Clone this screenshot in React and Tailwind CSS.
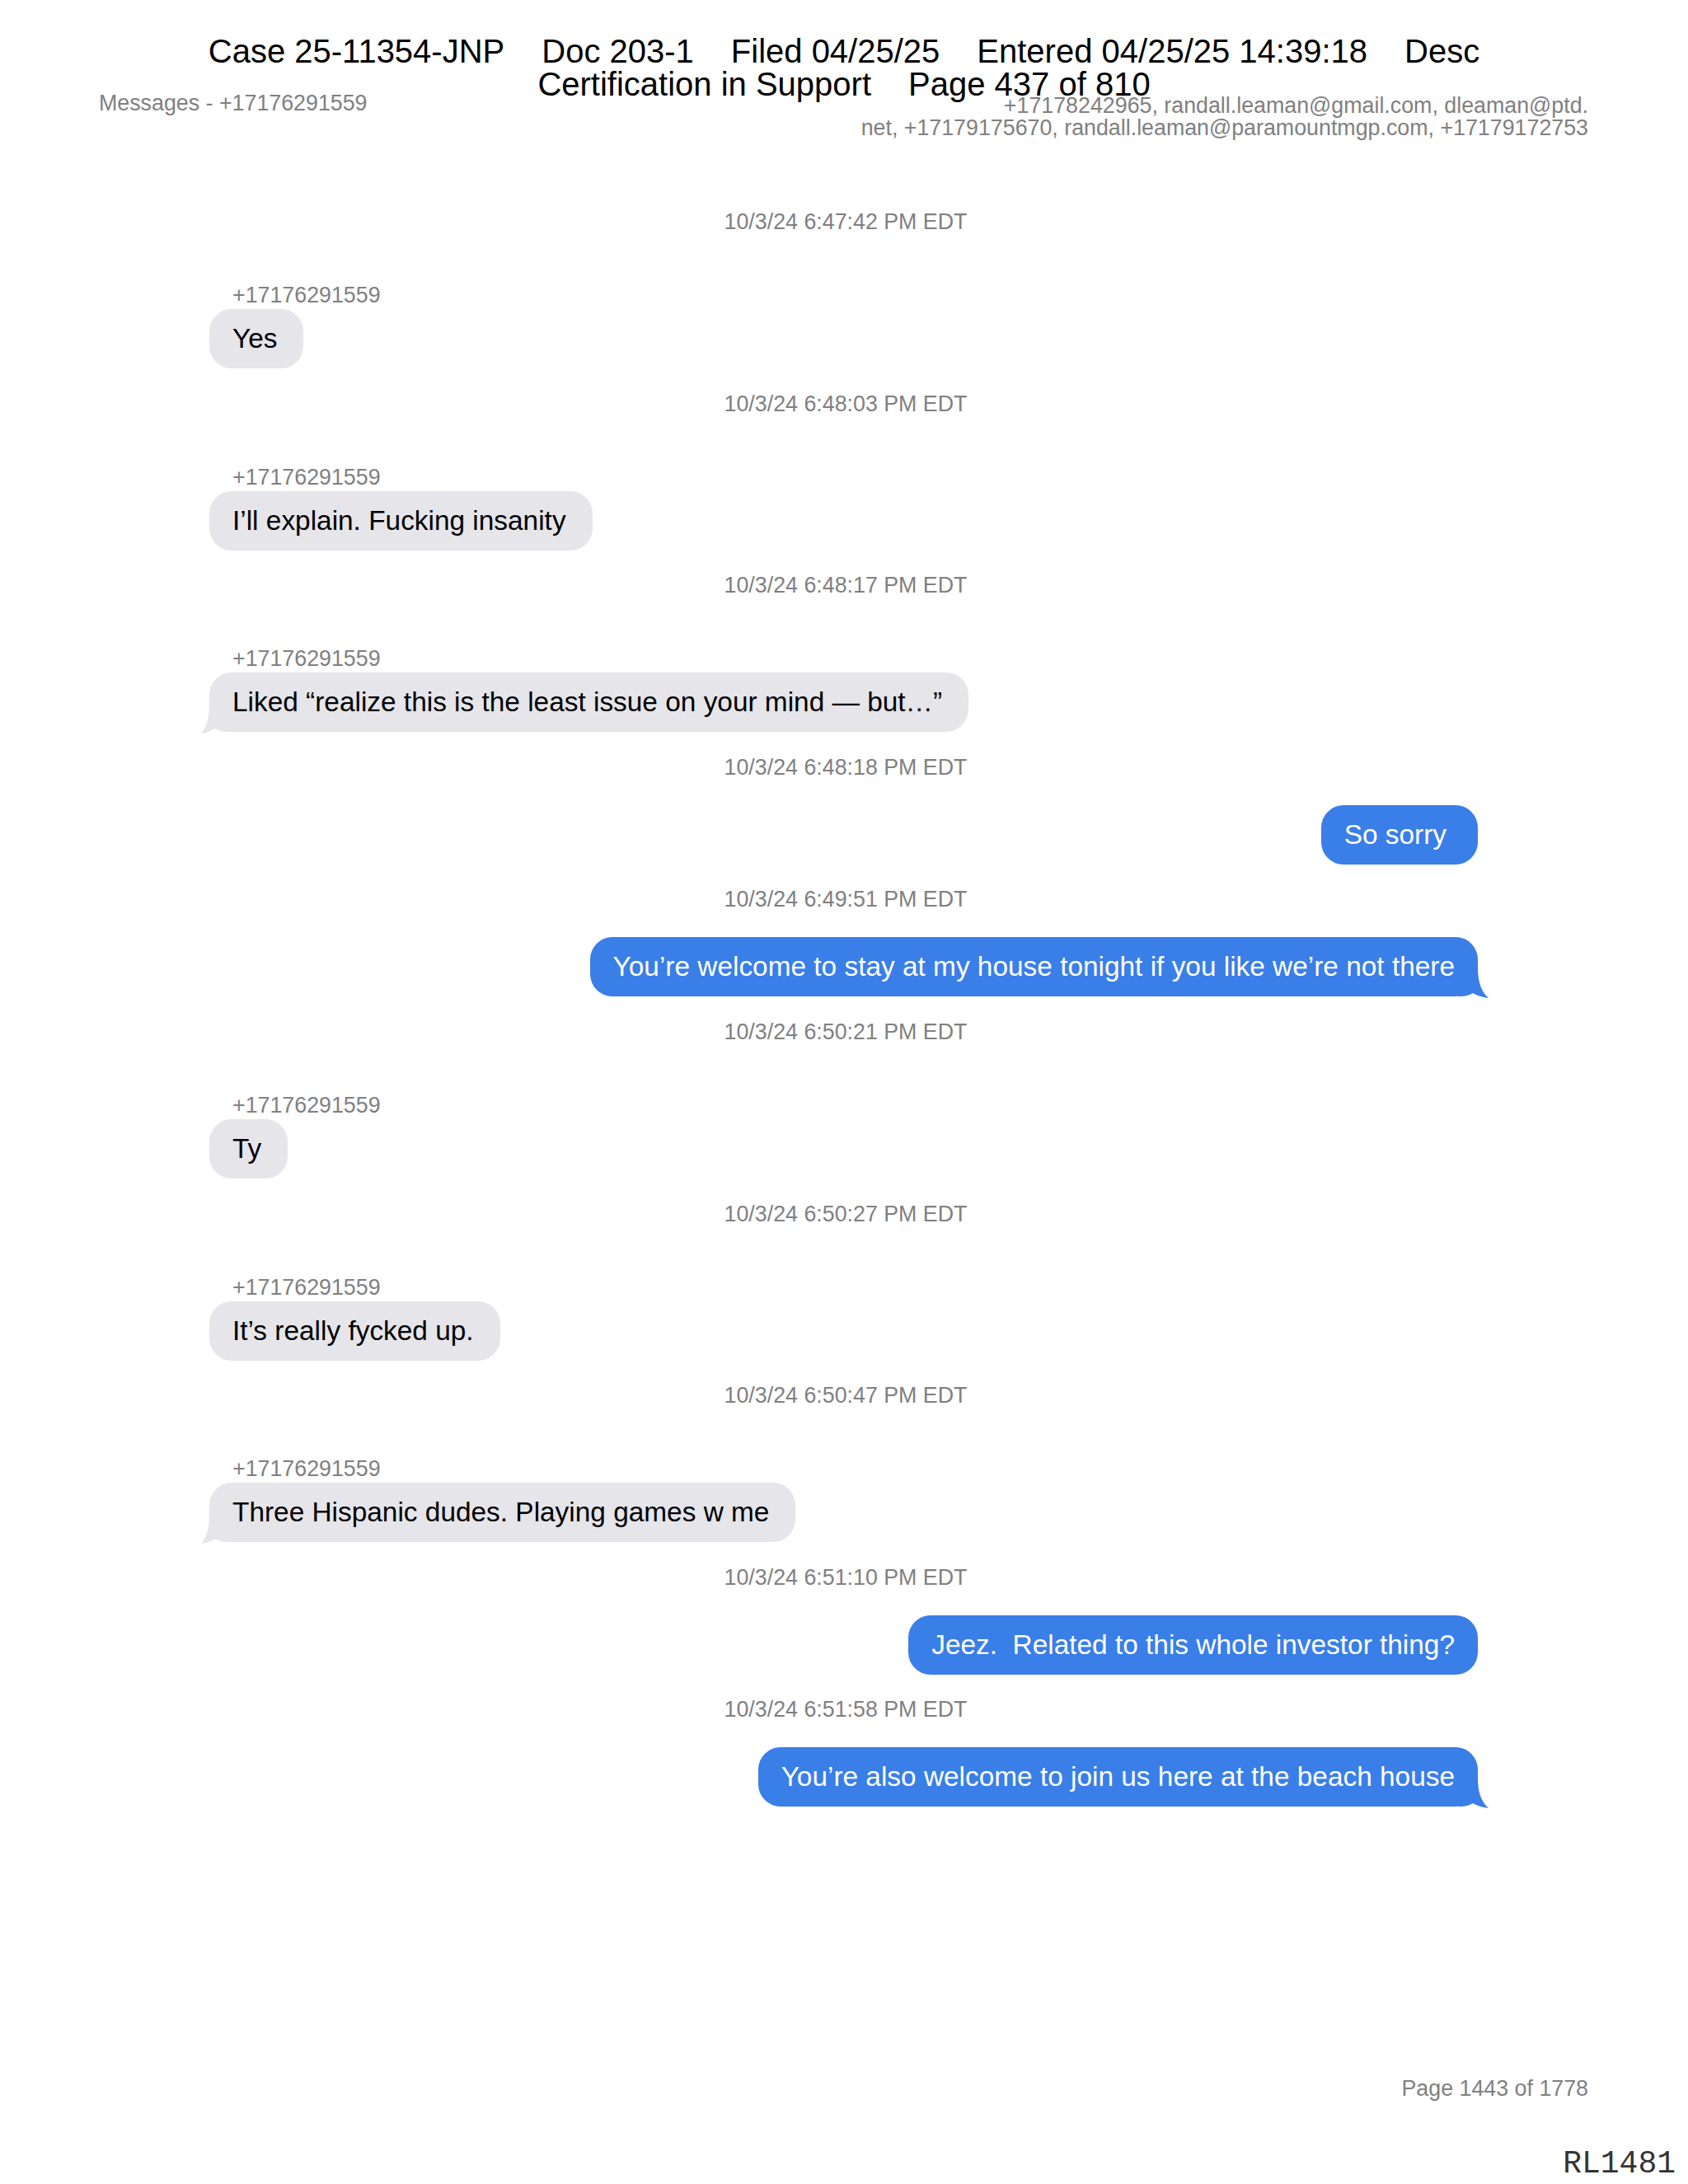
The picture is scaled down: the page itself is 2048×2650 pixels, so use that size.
import React from "react";

const SANS = { fontFamily: '"Liberation Sans", Arial, sans-serif' };

function Ts({ children, first }) {
  return (
    <div
      className={`${first ? "" : "mt-[27.6px]"} h-[30px] pl-[5px] text-center text-[26.8px] leading-[30px] text-[#808080]`}
    >
      {children}
    </div>
  );
}

function LeftTail() {
  return (
    <svg
      className="absolute left-[-10px] bottom-[-2px] w-[36px] h-[36px]"
      viewBox="0 0 36 36"
    >
      <path
        d="M36 0 L10 0 C10 16 7 28 0 36 C7 35 12 33 17 30 C22 33 28 34 36 34 Z"
        fill="#e5e5ea"
      />
    </svg>
  );
}

function RightTail() {
  return (
    <svg
      className="absolute right-[-13px] bottom-[-2px] w-[36px] h-[36px]"
      viewBox="0 0 36 36"
    >
      <path
        d="M0 0 L23 0 C23 16 27 28 36 36 C28 35 22 33 17 30 C12 33 7 34 0 34 Z"
        fill="#3a7ee8"
      />
    </svg>
  );
}

function Left({ label, text, tail }) {
  return (
    <div className="mt-[61px] flex flex-col items-start">
      <div className="h-[27px] pl-[28px] text-[26.8px] leading-[27px] text-[#808080]">
        {label}
      </div>
      <div className="relative mt-[3px] flex h-[72px] items-center whitespace-pre rounded-[27px] bg-[#e5e5ea] pl-[28px] pr-[32px] text-[33.4px] text-black">
        {tail && <LeftTail />}
        <span className="relative">{text}</span>
      </div>
    </div>
  );
}

function Right({ text, tail, extra }) {
  return (
    <div className="mt-[31px] flex flex-col items-end">
      <div
        className={`relative flex h-[72px] items-center whitespace-pre rounded-[27px] bg-[#3a7ee8] pl-[28px] ${extra ? "pr-[38px]" : "pr-[28px]"} text-[33.4px] text-white`}
      >
        {tail && <RightTail />}
        <span className="relative">{text}</span>
      </div>
    </div>
  );
}

export default function App() {
  const label = "+17176291559";
  return (
    <div className="relative w-[2048px] h-[2650px] bg-white overflow-hidden" style={SANS}>
      {/* court filing stamp */}
      <div className="absolute inset-x-0 top-[42px] flex flex-col items-center text-[40px] leading-[40px] text-black">
        <div className="flex gap-x-[45px] whitespace-pre">
          <span>Case 25-11354-JNP</span>
          <span>Doc 203-1</span>
          <span>Filed 04/25/25</span>
          <span>Entered 04/25/25 14:39:18</span>
          <span>Desc</span>
        </div>
        <div className="flex gap-x-[45px] whitespace-pre">
          <span>Certification in Support</span>
          <span>Page 437 of 810</span>
        </div>
      </div>

      {/* document header */}
      <div className="flex items-start justify-between pl-[120px] pr-[121px] pt-[112px] text-[26.8px] leading-[27px] text-[#808080]">
        <div>Messages - +17176291559</div>
        <div className="mt-[3px] text-right">
          <div>+17178242965, randall.leaman@gmail.com, dleaman@ptd.</div>
          <div>net, +17179175670, randall.leaman@paramountmgp.com, +17179172753</div>
        </div>
      </div>

      {/* conversation */}
      <div className="mt-[85px] flex flex-col pl-[254px] pr-[255px]">
        <Ts first>10/3/24 6:47:42 PM EDT</Ts>
        <Left label={label} text="Yes" />
        <Ts>10/3/24 6:48:03 PM EDT</Ts>
        <Left label={label} text="I’ll explain. Fucking insanity" />
        <Ts>10/3/24 6:48:17 PM EDT</Ts>
        <Left
          label={label}
          text="Liked “realize this is the least issue on your mind — but…”"
          tail
        />
        <Ts>10/3/24 6:48:18 PM EDT</Ts>
        <Right text="So sorry" extra />
        <Ts>10/3/24 6:49:51 PM EDT</Ts>
        <Right text="You’re welcome to stay at my house tonight if you like we’re not there" tail />
        <Ts>10/3/24 6:50:21 PM EDT</Ts>
        <Left label={label} text="Ty" />
        <Ts>10/3/24 6:50:27 PM EDT</Ts>
        <Left label={label} text="It’s really fycked up." />
        <Ts>10/3/24 6:50:47 PM EDT</Ts>
        <Left label={label} text="Three Hispanic dudes. Playing games w me" tail />
        <Ts>10/3/24 6:51:10 PM EDT</Ts>
        <Right text="Jeez.  Related to this whole investor thing?" />
        <Ts>10/3/24 6:51:58 PM EDT</Ts>
        <Right text="You’re also welcome to join us here at the beach house" tail />
      </div>

      {/* footer */}
      <div className="mt-[329px] pr-[121px] text-right text-[26.8px] leading-[27px] text-[#808080]">
        Page 1443 of 1778
      </div>
      <div
        className="mt-[59px] pr-[15px] text-right text-[38px] leading-[38px] text-[#333]"
        style={{ fontFamily: '"Liberation Mono", "Courier New", monospace' }}
      >
        RL1481
      </div>
    </div>
  );
}
